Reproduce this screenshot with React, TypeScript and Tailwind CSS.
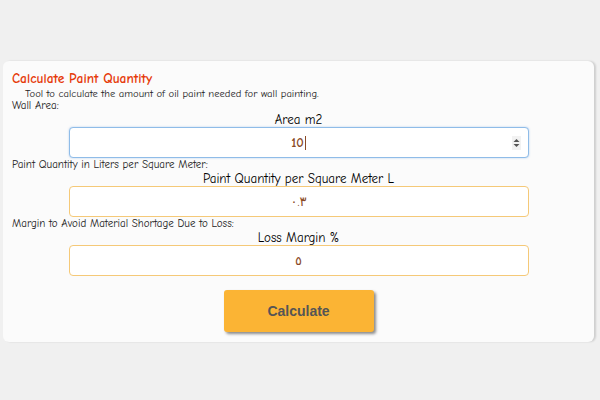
const font = { fontFamily: '"Comic Sans MS", "Comic Neue", "Liberation Sans", "DejaVu Sans", sans-serif' };

function Field({
    hint,
    label,
    value,
    focused,
    first,
}: {
    hint: string;
    label: string;
    value: string;
    focused?: boolean;
    first?: boolean;
}) {
    return (
        <div className={first ? "" : "mt-[1px]"}>
            <div className="h-[12px] leading-[12px] text-[11px] text-[#222]">{hint}</div>
            <div className="mt-[1px] h-[14px] leading-[14px] text-[13px] text-black text-center">{label}</div>
            <div
                className={
                    "relative mx-auto w-[460px] h-[31px] rounded-[4px] border bg-white flex items-center justify-center " +
                    (focused ? "border-[#8fbce8] shadow-[0_0_2px_rgba(100,160,230,0.5)]" : "border-[#f5c978]")
                }
            >
                <span className={"text-[13px] text-[#8a4a26] " + (focused ? "font-semibold" : "")} style={{ fontFamily: '"Comic Neue", "DejaVu Sans", sans-serif' }}>
                    {value}
                </span>
                {focused && <span className="ml-[1px] w-[1px] h-[14px] bg-[#8a4a26]" />}
                {focused && (
                    <div className="absolute right-[7px] top-[8px] w-[9px] h-[14px] bg-[#f2f2f2] flex items-center justify-center">
                        <svg width="7" height="10" viewBox="0 0 7 10">
                            <path d="M0.5 4 L3.5 1 L6.5 4 Z" fill="#555" />
                            <path d="M0.5 6 L3.5 9 L6.5 6 Z" fill="#555" />
                        </svg>
                    </div>
                )}
            </div>
        </div>
    );
}

export default function App() {
    return (
        <div className="w-[600px] h-[400px] bg-[#f0f0f0] overflow-hidden" style={font}>
            <div className="ml-[3px] mt-[61px] w-[591px] h-[281px] bg-[#fbfbfb] rounded-[6px] shadow-[2px_0_2px_rgba(0,0,0,0.14)] px-[9px] pt-[9px]">
                <h1 className="h-[18px] leading-[18px] text-[13.5px] font-bold text-[#e63b0c]">Calculate Paint Quantity</h1>
                <p className="h-[12px] leading-[12px] text-[10.6px] text-[#222] indent-[13px]">
                    Tool to calculate the amount of oil paint needed for wall painting.
                </p>

                <Field first hint="Wall Area:" label="Area m2" value="10" focused />
                <Field hint="Paint Quantity in Liters per Square Meter:" label="Paint Quantity per Square Meter L" value="٠.٣" />
                <Field hint="Margin to Avoid Material Shortage Due to Loss:" label="Loss Margin %" value="٥" />

                <div className="flex justify-center mt-[14px]">
                    <button
                        className="w-[150px] h-[42px] rounded-[3px] bg-[#fbb434] text-[#555] text-[14px] font-bold shadow-[2px_2px_3px_rgba(0,0,0,0.45)]"
                        style={{ fontFamily: '"Liberation Sans", Arial, sans-serif' }}
                    >
                        Calculate
                    </button>
                </div>
            </div>
        </div>
    );
}
